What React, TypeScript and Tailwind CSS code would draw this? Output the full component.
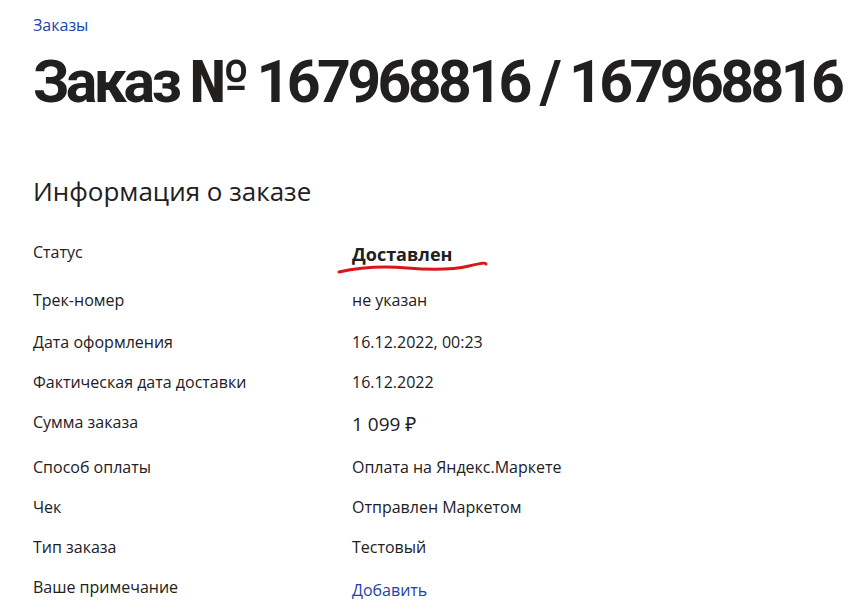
import React from 'react';

interface Row {
  label: string;
  value: string;
  kind?: 'status' | 'sum' | 'link';
  h: string;
}

const rows: Row[] = [
  { label: 'Статус', value: 'Доставлен', kind: 'status', h: 'h-[48px]' },
  { label: 'Трек-номер', value: 'не указан', h: 'h-[42px]' },
  { label: 'Дата оформления', value: '16.12.2022, 00:23', h: 'h-[40px]' },
  { label: 'Фактическая дата доставки', value: '16.12.2022', h: 'h-[40px]' },
  { label: 'Сумма заказа', value: '1 099 ₽', kind: 'sum', h: 'h-[45px]' },
  { label: 'Способ оплаты', value: 'Оплата на Яндекс.Маркете', h: 'h-[40px]' },
  { label: 'Чек', value: 'Отправлен Маркетом', h: 'h-[40px]' },
  { label: 'Тип заказа', value: 'Тестовый', h: 'h-[40px]' },
  { label: 'Ваше примечание', value: 'Добавить', kind: 'link', h: 'h-[40px]' },
];

function ValueCell({ row }: { row: Row }) {
  if (row.kind === 'status') {
    return (
      <div className="relative pt-[2px]">
        <span className="text-[18px] font-bold">{row.value}</span>
        {/* красное подчёркивание от руки */}
        <svg className="absolute left-[-15px] top-[19px]" width="152" height="16" viewBox="0 0 152 16">
          <path
            d="M2 12 C 20 8, 45 6, 70 8 S 115 10, 132 6 S 148 3, 149 4"
            fill="none"
            stroke="#d8161c"
            strokeWidth="3"
            strokeLinecap="round"
          />
        </svg>
      </div>
    );
  }
  if (row.kind === 'sum') return <span className="text-[19px] pt-[2px]">{row.value}</span>;
  if (row.kind === 'link') return <span className="text-[#1a44a8] pt-[3px]">{row.value}</span>;
  return <span>{row.value}</span>;
}

export default function App() {
  return (
    <div className="w-[867px] h-[612px] bg-white text-[#21201f] px-[33px] pt-[13px] overflow-hidden" style={{ fontFamily: '"Open Sans", "Noto Sans", sans-serif' }}>
      <div className="text-[16px] text-[#1a44a8] leading-[24px]">Заказы</div>
      <h1
        className="mt-[10px] text-[59px] font-bold leading-[70px] tracking-[-3.6px] whitespace-nowrap"
        style={{ fontFamily: 'Roboto, "Open Sans", sans-serif' }}
      >
        Заказ № 167968816 / 167968816
      </h1>
      <h2 className="mt-[57px] text-[26px] leading-[34px] font-normal">Информация о заказе</h2>
      <div className="mt-[33px] text-[16px] leading-[22px]">
        {rows.map((r) => (
          <div key={r.label} className={`grid grid-cols-[319px_1fr] items-start ${r.h}`}>
            <span>{r.label}</span>
            <ValueCell row={r} />
          </div>
        ))}
      </div>
    </div>
  );
}
